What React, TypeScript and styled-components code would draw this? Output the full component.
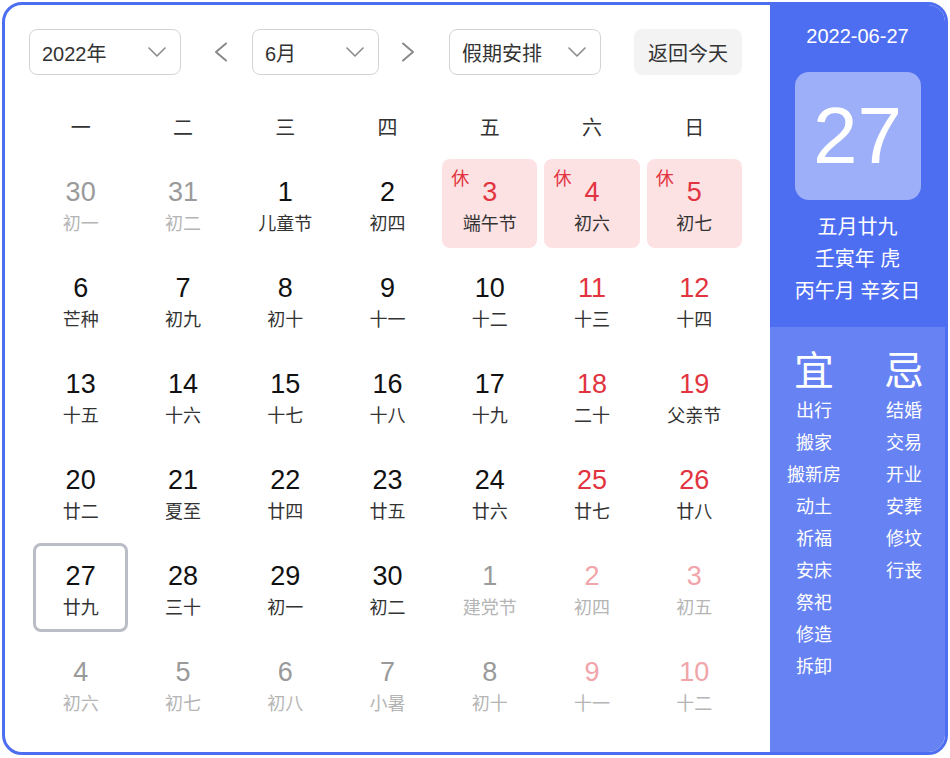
import React from "react";
import styled, { createGlobalStyle } from "styled-components";

const GlobalStyle = createGlobalStyle`
  html, body {
    margin: 0;
    padding: 0;
    background: #ffffff;
  }
  body {
    font-family: "Liberation Sans", "Noto Sans CJK SC", Arial, sans-serif;
  }
`;

type Day = {
  num: number;
  lunar: string;
  other?: boolean;
  weekend?: boolean;
  rest?: boolean;
  today?: boolean;
};

const WEEKDAYS = ["一", "二", "三", "四", "五", "六", "日"];

const rows: [number, string][][] = [
  [[30, "初一"], [31, "初二"], [1, "儿童节"], [2, "初四"], [3, "端午节"], [4, "初六"], [5, "初七"]],
  [[6, "芒种"], [7, "初九"], [8, "初十"], [9, "十一"], [10, "十二"], [11, "十三"], [12, "十四"]],
  [[13, "十五"], [14, "十六"], [15, "十七"], [16, "十八"], [17, "十九"], [18, "二十"], [19, "父亲节"]],
  [[20, "廿二"], [21, "夏至"], [22, "廿四"], [23, "廿五"], [24, "廿六"], [25, "廿七"], [26, "廿八"]],
  [[27, "廿九"], [28, "三十"], [29, "初一"], [30, "初二"], [1, "建党节"], [2, "初四"], [3, "初五"]],
  [[4, "初六"], [5, "初七"], [6, "初八"], [7, "小暑"], [8, "初十"], [9, "十一"], [10, "十二"]],
];

const days: Day[] = rows.flatMap((row, r) =>
  row.map(([num, lunar], c) => ({
    num,
    lunar,
    other: (r === 0 && c < 2) || (r === 4 && c > 3) || r === 5,
    weekend: c >= 5,
    rest: r === 0 && c >= 4,
    today: r === 4 && c === 0,
  }))
);

const good = ["出行", "搬家", "搬新房", "动土", "祈福", "安床", "祭祀", "修造", "拆卸"];
const bad = ["结婚", "交易", "开业", "安葬", "修坟", "行丧"];

const Card = styled.div`
  box-sizing: border-box;
  margin: 2px;
  width: 946px;
  height: 753px;
  border: 3px solid #4e6ef2;
  border-radius: 20px;
  overflow: hidden;
  display: flex;
  background: #fff;
`;

const Main = styled.div`
  width: 765px;
  padding: 24px 0 0 24px;
  box-sizing: border-box;
`;

const Toolbar = styled.div`
  display: flex;
  align-items: center;
  height: 46px;
`;

const Select = styled.div<{ $width: number }>`
  box-sizing: border-box;
  width: ${(p) => p.$width}px;
  height: 46px;
  border: 1px solid #d3d3d3;
  border-radius: 8px;
  padding: 0 14px 0 12px;
  display: flex;
  align-items: center;
  justify-content: space-between;
  font-size: 20px;
  color: #333;
`;

const Arrow = styled.div<{ $ml: number; $mr: number }>`
  width: 30px;
  height: 46px;
  margin: 0 ${(p) => p.$mr}px 0 ${(p) => p.$ml}px;
  display: flex;
  align-items: center;
  justify-content: center;
`;

const TodayButton = styled.div`
  margin-left: 33px;
  width: 108px;
  height: 46px;
  border-radius: 8px;
  background: #f3f3f4;
  display: flex;
  align-items: center;
  justify-content: center;
  font-size: 20px;
  color: #333;
`;

const Body = styled.div`
  width: 709px;
  margin-left: 4px;
`;

const WeekRow = styled.div`
  display: grid;
  grid-template-columns: repeat(7, 1fr);
  column-gap: 7px;
  margin-top: 33px;
  height: 40px;
  line-height: 40px;
  text-align: center;
  font-size: 20px;
  color: #333;
`;

const Grid = styled.div`
  display: grid;
  grid-template-columns: repeat(7, 1fr);
  grid-auto-rows: 89px;
  gap: 7px;
  margin-top: 11px;
`;

const Cell = styled.div<{ $rest?: boolean; $today?: boolean }>`
  position: relative;
  box-sizing: border-box;
  border-radius: 8px;
  display: flex;
  flex-direction: column;
  align-items: center;
  padding-top: ${(p) => (p.$today ? 15 : 18)}px;
  background: ${(p) => (p.$rest ? "#fde2e4" : "transparent")};
  border: ${(p) => (p.$today ? "3px solid #babdc5" : "none")};
`;

const Num = styled.div<{ $color: string }>`
  font-size: 27px;
  line-height: 30px;
  color: ${(p) => p.$color};
`;

const Lunar = styled.div<{ $color: string }>`
  font-size: 18px;
  line-height: 34px;
  color: ${(p) => p.$color};
`;

const RestTag = styled.span`
  position: absolute;
  top: 8px;
  left: 9px;
  font-size: 18px;
  line-height: 24px;
  color: #e23440;
`;

const Side = styled.div`
  width: 175px;
  display: flex;
  flex-direction: column;
  color: #fff;
`;

const SideTop = styled.div`
  height: 322px;
  background: #4e6ef2;
  display: flex;
  flex-direction: column;
  align-items: center;
  padding-top: 16px;
  box-sizing: border-box;
`;

const DateLine = styled.div`
  font-size: 20px;
  line-height: 30px;
`;

const BigDay = styled.div`
  margin-top: 21px;
  width: 126px;
  height: 128px;
  border-radius: 14px;
  background: rgba(255, 255, 255, 0.45);
  display: flex;
  align-items: center;
  justify-content: center;
  font-size: 80px;
  line-height: 1;
`;

const LunarInfo = styled.div`
  margin-top: 11px;
  text-align: center;
  font-size: 20px;
  line-height: 32px;
`;

const SideBottom = styled.div`
  flex: 1;
  background: #6783f3;
  display: grid;
  grid-template-columns: 80px 80px;
  column-gap: 10px;
  padding: 20px 0 0 4px;
  align-content: start;
`;

const Column = styled.div`
  display: flex;
  flex-direction: column;
  align-items: center;
`;

const ColumnTitle = styled.div`
  font-size: 40px;
  line-height: 48px;
`;

const Item = styled.div`
  font-size: 18px;
  line-height: 32px;
  white-space: nowrap;
`;

const Chevron = () => (
  <svg width="18" height="10" viewBox="0 0 18 10" fill="none">
    <path d="M1 1l8 8 8-8" stroke="#8a8a8a" strokeWidth="1.6" strokeLinecap="round" strokeLinejoin="round" />
  </svg>
);

const Caret = ({ dir }: { dir: "left" | "right" }) => (
  <svg width="14" height="20" viewBox="0 0 14 20" fill="none">
    <path
      d={dir === "left" ? "M12 1.5L2 10l10 8.5" : "M2 1.5L12 10 2 18.5"}
      stroke="#8a8a8a"
      strokeWidth="2"
      strokeLinecap="round"
      strokeLinejoin="round"
    />
  </svg>
);

const numColor = (d: Day) => {
  if (d.other) return d.weekend ? "#f1a4a9" : "#9a9a9a";
  return d.weekend || d.rest ? "#e23440" : "#111";
};

const App = () => (
  <>
    <GlobalStyle />
    <Card>
      <Main>
        <Toolbar>
          <Select $width={152}>
            2022年
            <Chevron />
          </Select>
          <Arrow $ml={25} $mr={16}>
            <Caret dir="left" />
          </Arrow>
          <Select $width={127}>
            6月
            <Chevron />
          </Select>
          <Arrow $ml={14} $mr={26}>
            <Caret dir="right" />
          </Arrow>
          <Select $width={152}>
            假期安排
            <Chevron />
          </Select>
          <TodayButton>返回今天</TodayButton>
        </Toolbar>
        <Body>
          <WeekRow>
            {WEEKDAYS.map((w) => (
              <div key={w}>{w}</div>
            ))}
          </WeekRow>
          <Grid>
            {days.map((d, i) => (
              <Cell key={i} $rest={d.rest} $today={d.today}>
                {d.rest && <RestTag>休</RestTag>}
                <Num $color={numColor(d)}>{d.num}</Num>
                <Lunar $color={d.other ? "#b5b5b5" : "#333"}>{d.lunar}</Lunar>
              </Cell>
            ))}
          </Grid>
        </Body>
      </Main>
      <Side>
        <SideTop>
          <DateLine>2022-06-27</DateLine>
          <BigDay>27</BigDay>
          <LunarInfo>
            <div>五月廿九</div>
            <div>壬寅年 虎</div>
            <div>丙午月 辛亥日</div>
          </LunarInfo>
        </SideTop>
        <SideBottom>
          <Column>
            <ColumnTitle>宜</ColumnTitle>
            {good.map((g) => (
              <Item key={g}>{g}</Item>
            ))}
          </Column>
          <Column>
            <ColumnTitle>忌</ColumnTitle>
            {bad.map((b) => (
              <Item key={b}>{b}</Item>
            ))}
          </Column>
        </SideBottom>
      </Side>
    </Card>
  </>
);

export default App;
